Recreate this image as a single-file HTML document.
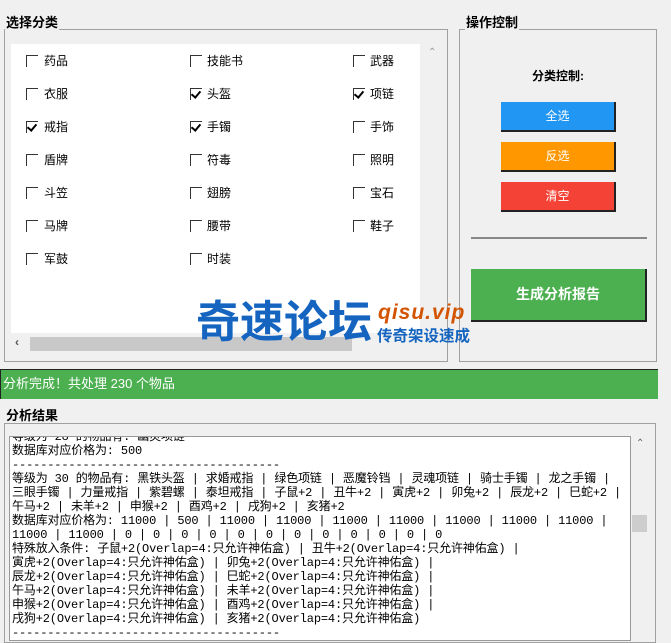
<!DOCTYPE html>
<html><head><meta charset="utf-8"><style>
*{margin:0;padding:0;box-sizing:border-box}
body{width:671px;height:635px;overflow:hidden;background:#f0f0f0;font-family:"Liberation Sans","Microsoft YaHei","Noto Sans CJK SC",sans-serif;position:relative;color:#000}
.abs{position:absolute}
.gb{position:absolute;border:1px solid #a0a0a0}
.gt{position:absolute;background:#f0f0f0;font-size:13px;font-weight:bold;padding:0 1px;line-height:14px}
.cb{position:absolute;width:12px;height:12px;border-top:1px solid #333;border-left:1px solid #333;background:#fff}
.cb.c::after{content:"";position:absolute;left:2px;top:0px;width:4px;height:7px;border-right:2px solid #000;border-bottom:2px solid #000;transform:rotate(40deg)}
.lb{position:absolute;font-size:12px;line-height:14px}
.btn{position:absolute;color:#fff;font-size:12px;text-align:center;border-right:2px solid #222;border-bottom:2px solid #222}
pre{font-family:"Liberation Mono","Noto Sans CJK SC",monospace;font-size:12px;line-height:14px;white-space:pre;letter-spacing:-0.15px}
</style></head><body>
<div class="gb" style="left:4px;top:29px;width:444px;height:333px"></div>
<div class="gt" style="left:5px;top:16px">选择分类</div>
<div class="abs" style="left:11px;top:44px;width:409px;height:289px;background:#fff"></div>
<div class="abs" style="left:428px;top:47px;font-size:10px;color:#999">&#8963;</div>
<div class="abs" style="left:11px;top:333px;width:410px;height:19px;background:#f0f0f0"></div>
<div class="abs" style="left:30px;top:337px;width:322px;height:14px;background:#c8c8c8"></div>
<div class="abs" style="left:15px;top:335px;font-size:12px;color:#555;font-weight:bold">&lsaquo;</div>

<div class="cb" style="left:26px;top:55px"></div><div class="lb" style="left:44px;top:54px">药品</div>
<div class="cb" style="left:190px;top:55px"></div><div class="lb" style="left:207px;top:54px">技能书</div>
<div class="cb" style="left:353px;top:55px"></div><div class="lb" style="left:370px;top:54px">武器</div>
<div class="cb" style="left:26px;top:88px"></div><div class="lb" style="left:44px;top:87px">衣服</div>
<div class="cb c" style="left:190px;top:88px"></div><div class="lb" style="left:207px;top:87px">头盔</div>
<div class="cb c" style="left:353px;top:88px"></div><div class="lb" style="left:370px;top:87px">项链</div>
<div class="cb c" style="left:26px;top:121px"></div><div class="lb" style="left:44px;top:120px">戒指</div>
<div class="cb c" style="left:190px;top:121px"></div><div class="lb" style="left:207px;top:120px">手镯</div>
<div class="cb" style="left:353px;top:121px"></div><div class="lb" style="left:370px;top:120px">手饰</div>
<div class="cb" style="left:26px;top:154px"></div><div class="lb" style="left:44px;top:153px">盾牌</div>
<div class="cb" style="left:190px;top:154px"></div><div class="lb" style="left:207px;top:153px">符毒</div>
<div class="cb" style="left:353px;top:154px"></div><div class="lb" style="left:370px;top:153px">照明</div>
<div class="cb" style="left:26px;top:187px"></div><div class="lb" style="left:44px;top:186px">斗笠</div>
<div class="cb" style="left:190px;top:187px"></div><div class="lb" style="left:207px;top:186px">翅膀</div>
<div class="cb" style="left:353px;top:187px"></div><div class="lb" style="left:370px;top:186px">宝石</div>
<div class="cb" style="left:26px;top:220px"></div><div class="lb" style="left:44px;top:219px">马牌</div>
<div class="cb" style="left:190px;top:220px"></div><div class="lb" style="left:207px;top:219px">腰带</div>
<div class="cb" style="left:353px;top:220px"></div><div class="lb" style="left:370px;top:219px">鞋子</div>
<div class="cb" style="left:26px;top:253px"></div><div class="lb" style="left:44px;top:252px">军鼓</div>
<div class="cb" style="left:190px;top:253px"></div><div class="lb" style="left:207px;top:252px">时装</div>

<div class="gb" style="left:459px;top:29px;width:198px;height:333px"></div>
<div class="gt" style="left:465px;top:16px">操作控制</div>
<div class="abs" style="left:459px;top:67px;width:198px;text-align:center;font-size:12px;font-weight:bold">分类控制:</div>
<div class="btn" style="left:501px;top:102px;width:115px;height:30px;line-height:28px;background:#2196f3">全选</div>
<div class="btn" style="left:501px;top:142px;width:115px;height:30px;line-height:28px;background:#ff9800">反选</div>
<div class="btn" style="left:501px;top:182px;width:115px;height:30px;line-height:28px;background:#f44336">清空</div>
<div class="abs" style="left:471px;top:237px;width:176px;height:2px;background:#888"></div>
<div class="btn" style="left:471px;top:269px;width:176px;height:53px;line-height:51px;background:#4caf50;font-size:14px;font-weight:bold">生成分析报告</div>

<div class="abs" style="left:0;top:369px;width:658px;height:30px;background:#4caf50;border-top:1px solid #222;border-left:1px solid #222;color:#fff;font-size:13px;line-height:28px;padding-left:2px">分析完成！共处理 230 个物品</div>

<div class="gb" style="left:4px;top:423px;width:652px;height:220px"></div>
<div class="gt" style="left:5px;top:409px">分析结果</div>
<div class="abs" style="left:9px;top:436px;width:622px;height:205px;background:#fff;border:1px solid #999;overflow:hidden">
<pre style="position:absolute;left:2px;top:-7px;">等级为 28 的物品有: 幽灵项链
数据库对应价格为: 500
--------------------------------------
等级为 30 的物品有: 黑铁头盔 | 求婚戒指 | 绿色项链 | 恶魔铃铛 | 灵魂项链 | 骑士手镯 | 龙之手镯 |
三眼手镯 | 力量戒指 | 紫碧螺 | 泰坦戒指 | 子鼠+2 | 丑牛+2 | 寅虎+2 | 卯兔+2 | 辰龙+2 | 巳蛇+2 |
午马+2 | 未羊+2 | 申猴+2 | 酉鸡+2 | 戌狗+2 | 亥猪+2
数据库对应价格为: 11000 | 500 | 11000 | 11000 | 11000 | 11000 | 11000 | 11000 | 11000 |
11000 | 11000 | 0 | 0 | 0 | 0 | 0 | 0 | 0 | 0 | 0 | 0 | 0 | 0
特殊放入条件: 子鼠+2(Overlap=4:只允许神佑盒) | 丑牛+2(Overlap=4:只允许神佑盒) |
寅虎+2(Overlap=4:只允许神佑盒) | 卯兔+2(Overlap=4:只允许神佑盒) |
辰龙+2(Overlap=4:只允许神佑盒) | 巳蛇+2(Overlap=4:只允许神佑盒) |
午马+2(Overlap=4:只允许神佑盒) | 未羊+2(Overlap=4:只允许神佑盒) |
申猴+2(Overlap=4:只允许神佑盒) | 酉鸡+2(Overlap=4:只允许神佑盒) |
戌狗+2(Overlap=4:只允许神佑盒) | 亥猪+2(Overlap=4:只允许神佑盒)
--------------------------------------</pre>
</div>
<div class="abs" style="left:632px;top:436px;width:18px;height:199px;background:#f0f0f0"></div>
<div class="abs" style="left:636px;top:438px;font-size:10px;color:#666">&#8963;</div>
<div class="abs" style="left:632px;top:515px;width:15px;height:17px;background:#cdcdcd"></div>

<div class="abs" style="left:196px;top:298px;font-size:44px;font-weight:bold;color:#1565c0;letter-spacing:0px;line-height:50px">奇速论坛</div>
<div class="abs" style="left:378px;top:301px;font-size:21px;font-weight:bold;font-style:italic;color:#d35400;line-height:24px;letter-spacing:1px">qisu.vip</div>
<div class="abs" style="left:377px;top:327px;font-size:15.5px;font-weight:bold;color:#1565c0;line-height:20px">传奇架设速成</div>
</body></html>
